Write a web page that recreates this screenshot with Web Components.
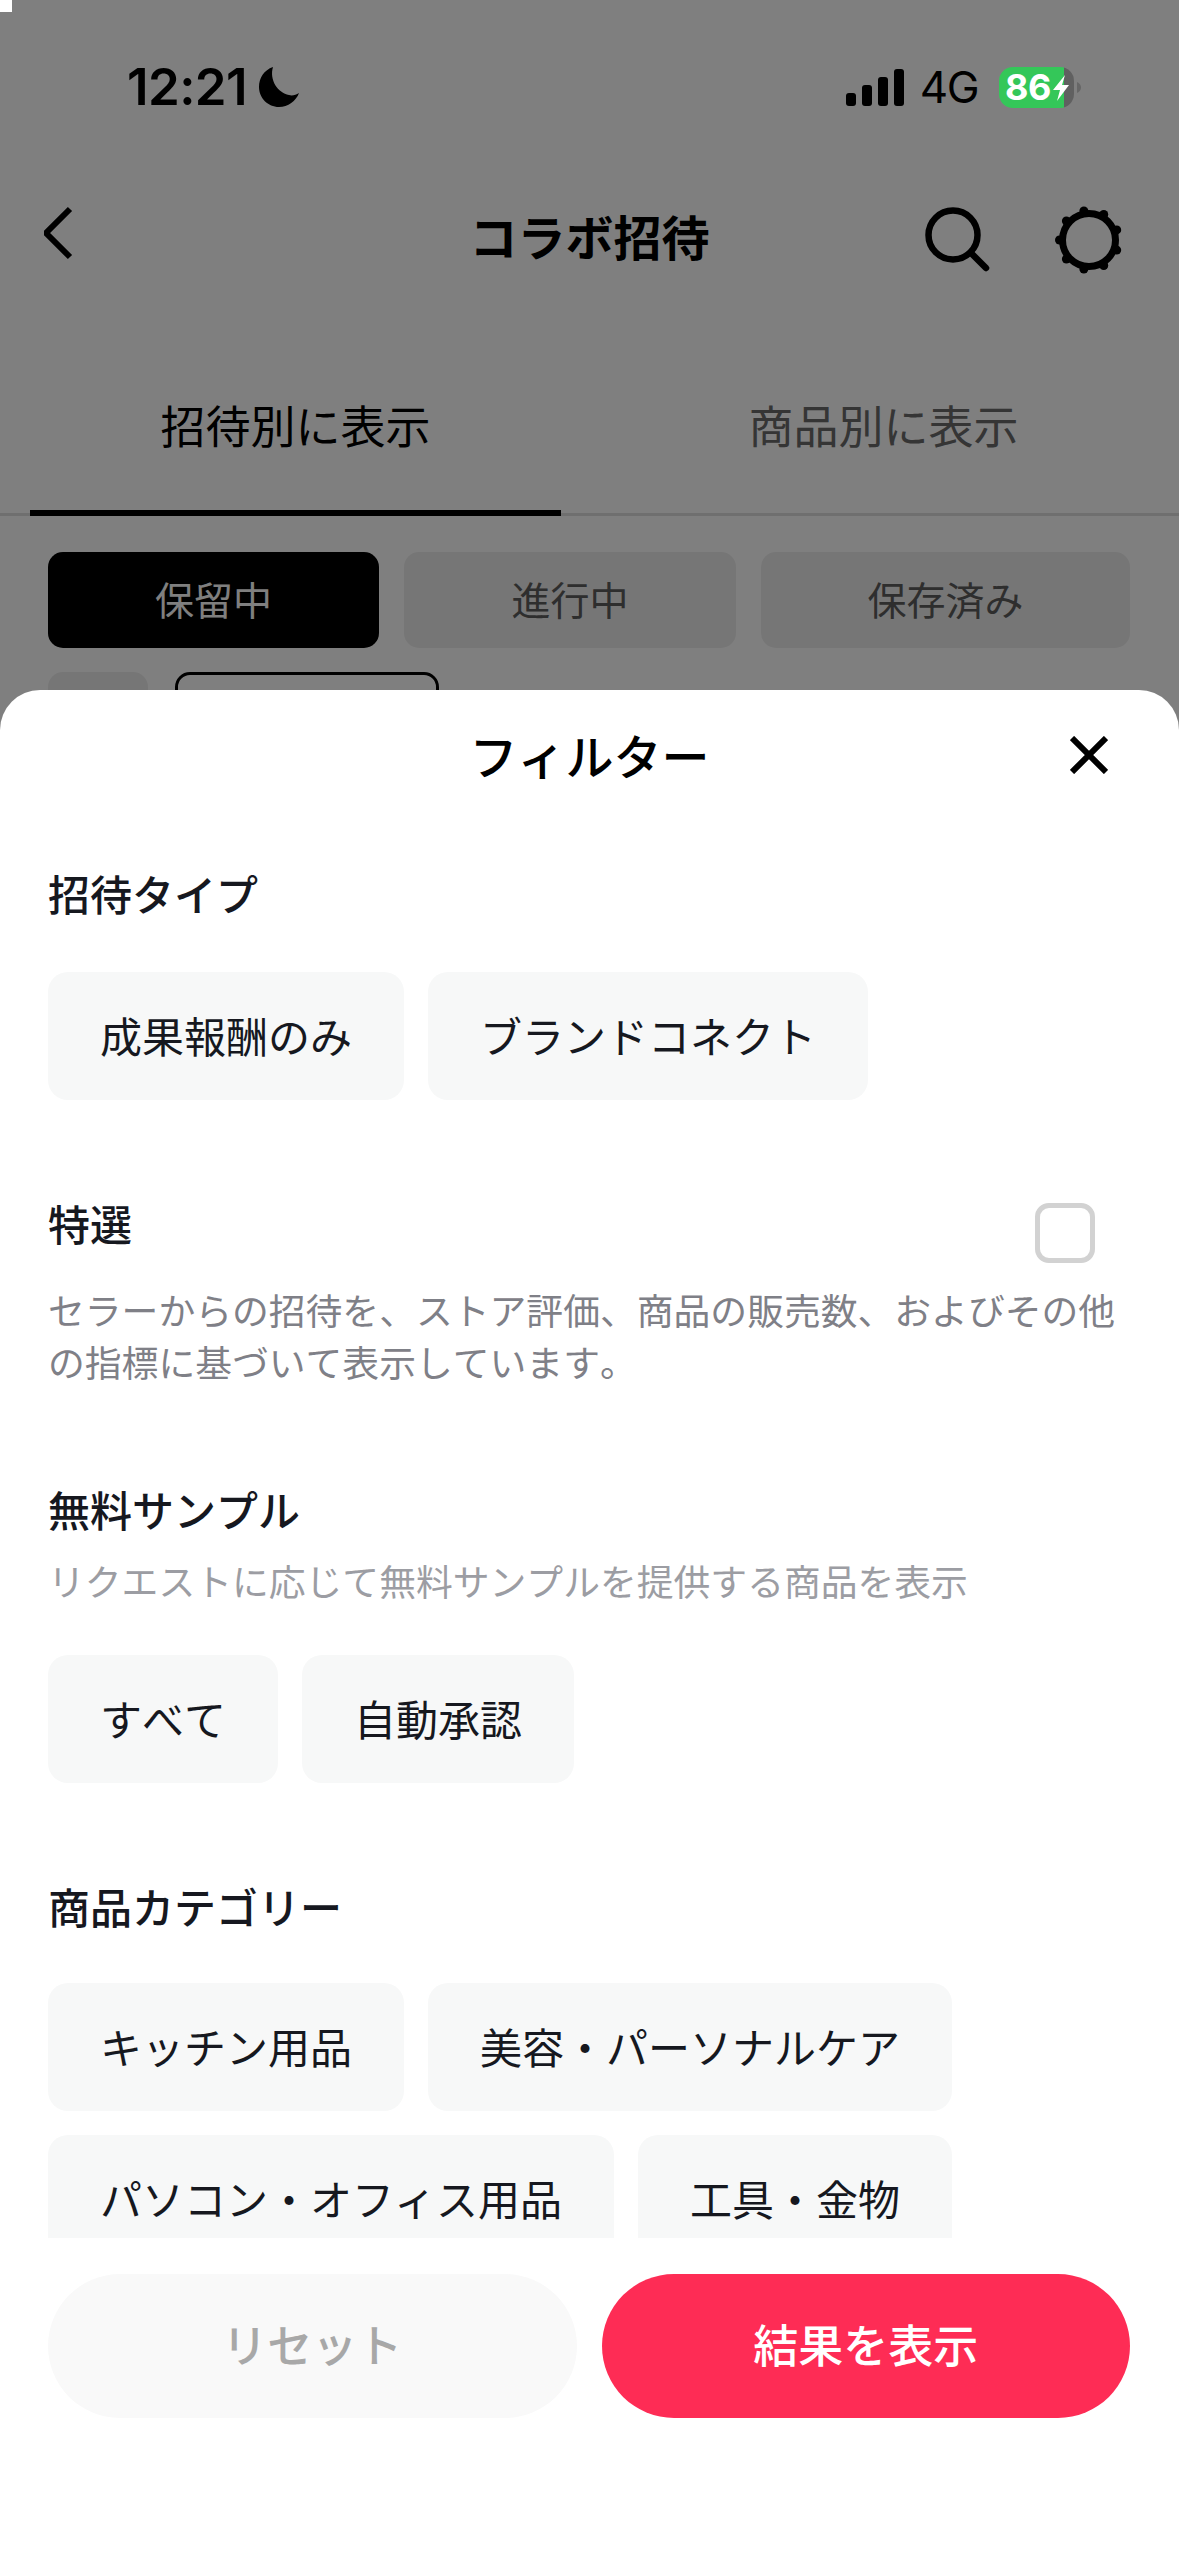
<!DOCTYPE html>
<html lang="ja">
<head>
<meta charset="utf-8">
<title>フィルター</title>
<style>
    html, body {
        margin: 0;
        padding: 0;
        background: #fff;
    }
    body {
        font-family: "Noto Sans CJK JP", "Noto Sans", sans-serif;
        font-kerning: none;
    }
</style>
</head>
<body>
<template id="status_bar_tpl">
    <style>
        :host {
            display: flex;
            position: relative;
            z-index: 1;
            height: 174px;
            align-items: center;
            justify-content: space-between;
            padding: 0 98px 0 127px;
            color: #000;
        }
        .left, .right {
            display: flex;
            align-items: center;
        }
        .time {
            font: 600 51px/60px Inter, "Liberation Sans", sans-serif;
            letter-spacing: -0.6px;
        }
        .moon {
            margin-left: 12px;
        }
        .net {
            font: 400 44px/50px Inter, "Liberation Sans", sans-serif;
            margin: 0 21px 0 16px;
            letter-spacing: -1.500px;
        }
        .battery {
            display: flex;
            align-items: center;
        }
        .cell {
            position: relative;
            display: flex;
            align-items: center;
            width: 75px;
            height: 41px;
            border-radius: 14px;
            background: linear-gradient(to right, #34c759 65px, #606060 65px);
            color: #fff;
            font: 700 36px/41px Inter, "Liberation Sans", sans-serif;
            letter-spacing: -0.5px;
            padding-left: 6px;
            box-sizing: border-box;
        }
        .bolt {
            position: absolute;
            left: 52px;
            top: 8px;
        }
        .nub {
            margin-left: 3px;
        }
    </style>
    <div class="left">
        <span class="time">12:21</span>
        <svg class="moon" width="40" height="40" viewBox="0 0 40 40"><path d="M14 0C5 3 0 11 0 20c0 11 9 20 20 20 9 0 17-6 20-14-3 2-7 3-10 2C19 26 10 13 14 0z" fill="#000"/></svg>
    </div>
    <div class="right">
        <svg width="58" height="37" viewBox="0 0 58 37" fill="#000">
            <rect x="0" y="24" width="10" height="13" rx="3"/>
            <rect x="16" y="16" width="10" height="21" rx="3"/>
            <rect x="32" y="8" width="10" height="29" rx="3"/>
            <rect x="48" y="0" width="10" height="37" rx="3"/>
        </svg>
        <span class="net">4G</span>
        <div class="battery">
            <div class="cell">
                <span>86</span>
                <svg class="bolt" width="19" height="26" viewBox="0 0 19 26"><polygon points="14,0 2,15 9,15 6,26 18,10 11,10" fill="#fff"/></svg>
            </div>
            <svg class="nub" width="4" height="11" viewBox="0 0 4 11"><path d="M0 0c2.500 1 4 3 4 5.500S2.500 10 0 11z" fill="#666"/></svg>
        </div>
    </div>
</template>

<template id="nav_bar_tpl">
    <style>
        :host {
            display: grid;
            grid-template-columns: 1fr auto 1fr;
            align-items: center;
            height: 132px;
            padding: 0 48px;
            color: #000;
        }
        .back {
            margin: 0 0 14px -4px;
        }
        .title {
            height: 60px;
            font-size: 48px;
            line-height: 50px;
            font-weight: 700;
            text-align: center;
        }
        .actions {
            display: flex;
            justify-content: flex-end;
            align-items: center;
            gap: 64px;
            margin-right: 8px;
        }
    </style>
    <svg class="back" width="30" height="54" viewBox="0 0 30 54"><path d="M27 3 3 27l24 24" transform="translate(-1 0)" fill="none" stroke="#000" stroke-width="6"/></svg>
    <div class="title"><slot></slot></div>
    <div class="actions">
        <svg width="66" height="66" viewBox="0 0 66 66" fill="none" stroke="#000" stroke-width="6.500" stroke-linecap="round"><circle cx="28" cy="28" r="24.500"/><path d="M46 46 61 61"/></svg>
        <svg class="gear" width="68" height="68" viewBox="-34 -34 68 68"></svg>
    </div>
</template>

<template id="tab_bar_tpl">
    <style>
        :host {
            display: grid;
            grid-template-columns: 1fr 1fr;
            gap: 57px;
            height: 207px;
            padding: 0 30px;
            border-bottom: 3px solid #dedede;
        }
    </style>
    <slot></slot>
</template>

<template id="tab_item_tpl">
    <style>
        :host {
            display: block;
            height: 213px;
            box-sizing: border-box;
            padding-top: 89px;
            border-bottom: 6px solid transparent;
            margin-bottom: -3px;
            font-size: 45px;
            line-height: 60px;
            text-align: center;
            color: #6a6a6a;
        }
        :host([active]) {
            height: 210px;
            border-bottom-color: #000;
            color: #000;
        }
    </style>
    <slot></slot>
</template>

<template id="status_chip_tpl">
    <style>
        :host {
            display: flex;
            align-items: center;
            justify-content: center;
            height: 96px;
            box-sizing: border-box;
            padding-bottom: 4px;
            border-radius: 15px;
            background: #ededed;
            color: #5c5c5c;
            font-size: 39px;
        }
        :host([selected]) {
            background: #000;
            color: #fff;
        }
        :host([outlined]) {
            background: transparent;
            border: 3px solid #000;
        }
    </style>
    <slot></slot>
</template>

<template id="filter_sheet_tpl">
    <style>
        :host {
            position: absolute;
            left: 0;
            top: 690px;
            width: 1179px;
            height: 1866px;
            display: flex;
            flex-direction: column;
            background: #fff;
            border-radius: 40px 40px 0 0;
        }
        header {
            display: grid;
            grid-template-columns: 1fr auto 1fr;
            align-items: center;
            height: 130px;
            flex: none;
            padding: 0 48px;
            font-size: 48px;
            font-weight: 500;
            color: #000;
        }
        header svg {
            justify-self: end;
            margin-right: 23px;
        }
        .title {
            padding-bottom: 3px;
        }
        .body {
            height: 1418px;
            flex: none;
            overflow: hidden;
            padding: 0 48px;
        }
        .footer {
            display: flex;
            gap: 25px;
            padding: 36px 49px 0 48px;
        }
    </style>
    <header>
        <span></span>
        <span class="title"><slot name="title"></slot></span>
        <svg width="38" height="38" viewBox="0 0 38 38"><path d="M2 2 36 36M36 2 2 36" fill="none" stroke="#000" stroke-width="6"/></svg>
    </header>
    <div class="body"><slot></slot></div>
    <div class="footer"><slot name="footer"></slot></div>
</template>

<template id="filter_section_tpl">
    <style>
        :host {
            display: block;
            position: relative;
            color: #16181f;
        }
        .label {
            height: 60px;
            font-size: 42px;
            font-weight: 500;
            line-height: 57px;
        }
    </style>
    <div class="label"><slot name="label"></slot></div>
    <slot></slot>
</template>

<template id="chip_group_tpl">
    <style>
        :host {
            display: flex;
            flex-wrap: wrap;
            gap: 24px;
        }
    </style>
    <slot></slot>
</template>

<template id="filter_chip_tpl">
    <style>
        :host {
            display: flex;
            align-items: center;
            height: 128px;
            box-sizing: border-box;
            padding: 0 52px 4px;
            border-radius: 20px;
            background: #f7f8f8;
            color: #16181f;
            font-size: 42px;
            white-space: nowrap;
        }
    </style>
    <slot></slot>
</template>

<template id="hint_text_tpl">
    <style>
        :host {
            display: block;
            font-size: 36.800px;
            line-height: 52px;
            color: #7f8087;
        }
        :host([light]) {
            color: #9c9da3;
        }
    </style>
    <slot></slot>
</template>

<template id="check_box_tpl">
    <style>
        :host {
            position: absolute;
            top: 9px;
            right: 36px;
            width: 60px;
            height: 60px;
            box-sizing: border-box;
            border: 5px solid #d2d2d2;
            border-radius: 14px;
            background: #fff;
        }
    </style>
</template>

<template id="pill_button_tpl">
    <style>
        :host {
            display: flex;
            flex: 1;
            align-items: center;
            justify-content: center;
            height: 144px;
            box-sizing: border-box;
            padding-bottom: 5px;
            border-radius: 72px;
            background: #f9f9f9;
            color: #a8a8a8;
            font-size: 45px;
            font-weight: 500;
        }
        :host([primary]) {
            background: #fe2c55;
            color: #fff;
        }
    </style>
    <slot></slot>
</template>

<template id="app_screen_tpl">
    <style>
        :host {
            display: block;
            position: relative;
            width: 1179px;
            height: 2556px;
            overflow: hidden;
            background: #fff;
        }
        .row {
            display: grid;
            gap: 24px;
            padding: 0 49px 0 48px;
        }
        .row.first {
            grid-template-columns: 331px 332px 1fr;
            column-gap: 25px;
            margin-top: 36px;
        }
        .row.second {
            grid-template-columns: 100px 264px;
            gap: 27px;
            margin-top: 24px;
        }
        .row.second > * {
            height: 96px;
        }
        .scrim {
            position: absolute;
            inset: 0;
            background: rgba(0, 0, 0, 0.5);
        }
        .corner {
            position: absolute;
            z-index: 2;
            left: 0;
            top: 0;
            width: 12px;
            height: 12px;
            background: #fff;
        }
    </style>
    <status-bar></status-bar>
    <nav-bar>コラボ招待</nav-bar>
    <tab-bar>
        <tab-item active>招待別に表示</tab-item>
        <tab-item>商品別に表示</tab-item>
    </tab-bar>
    <div class="row first">
        <status-chip selected>保留中</status-chip>
        <status-chip>進行中</status-chip>
        <status-chip>保存済み</status-chip>
    </div>
    <div class="row second">
        <status-chip></status-chip>
        <status-chip outlined></status-chip>
    </div>
    <div class="scrim"></div>
    <div class="corner"></div>
    <slot></slot>
</template>

<app-screen>
    <filter-sheet>
        <span slot="title">フィルター</span>

        <filter-section style="margin-top:44px">
            <span slot="label">招待タイプ</span>
            <chip-group style="margin-top:48px">
                <filter-chip>成果報酬のみ</filter-chip>
                <filter-chip>ブランドコネクト</filter-chip>
            </chip-group>
        </filter-section>

        <filter-section style="margin-top:94px">
            <span slot="label">特選</span>
            <check-box></check-box>
            <hint-text style="margin:29px 0 3px">セラーからの招待を、ストア評価、商品の販売数、およびその他の指標に基づいて表示しています。</hint-text>
        </filter-section>

        <filter-section style="margin-top:93px">
            <span slot="label">無料サンプル</span>
            <hint-text light style="margin-top:14px">リクエストに応じて無料サンプルを提供する商品を表示</hint-text>
            <chip-group style="margin-top:49px">
                <filter-chip>すべて</filter-chip>
                <filter-chip>自動承認</filter-chip>
            </chip-group>
        </filter-section>

        <filter-section style="margin-top:94px">
            <span slot="label">商品カテゴリー</span>
            <chip-group style="margin-top:46px">
                <filter-chip>キッチン用品</filter-chip>
                <filter-chip>美容・パーソナルケア</filter-chip>
                <filter-chip>パソコン・オフィス用品</filter-chip>
                <filter-chip>工具・金物</filter-chip>
            </chip-group>
        </filter-section>

        <pill-button slot="footer">リセット</pill-button>
        <pill-button slot="footer" primary>結果を表示</pill-button>
    </filter-sheet>
</app-screen>

<script type="module">
    function define(tag, templateId, setup) {
        customElements.define(tag, class extends HTMLElement {
            constructor() {
                super();
                this.attachShadow({mode: 'open'});
                this.shadowRoot.appendChild(document.getElementById(templateId).content.cloneNode(true));
                if (setup) setup(this.shadowRoot);
            }
        });
    }

    // the gear has nine bumps, 40deg apart
    function drawGear(root) {
        const gear = root.querySelector('.gear');
        let markup = '<circle r="26.500" fill="none" stroke="#000" stroke-width="7"/>';
        for (let i = 0; i < 9; i++) {
            const angle = (180 + i * 40) * Math.PI / 180;
            markup += `<circle cx="${29.5 * Math.cos(angle)}" cy="${29.5 * Math.sin(angle)}" r="4.500" fill="#000"/>`;
        }
        gear.innerHTML = markup;
    }

    define('status-bar', 'status_bar_tpl');
    define('nav-bar', 'nav_bar_tpl', drawGear);
    define('tab-bar', 'tab_bar_tpl');
    define('tab-item', 'tab_item_tpl');
    define('status-chip', 'status_chip_tpl');
    define('filter-sheet', 'filter_sheet_tpl');
    define('filter-section', 'filter_section_tpl');
    define('chip-group', 'chip_group_tpl');
    define('filter-chip', 'filter_chip_tpl');
    define('hint-text', 'hint_text_tpl');
    define('check-box', 'check_box_tpl');
    define('pill-button', 'pill_button_tpl');
    define('app-screen', 'app_screen_tpl');
</script>
</body>
</html>
